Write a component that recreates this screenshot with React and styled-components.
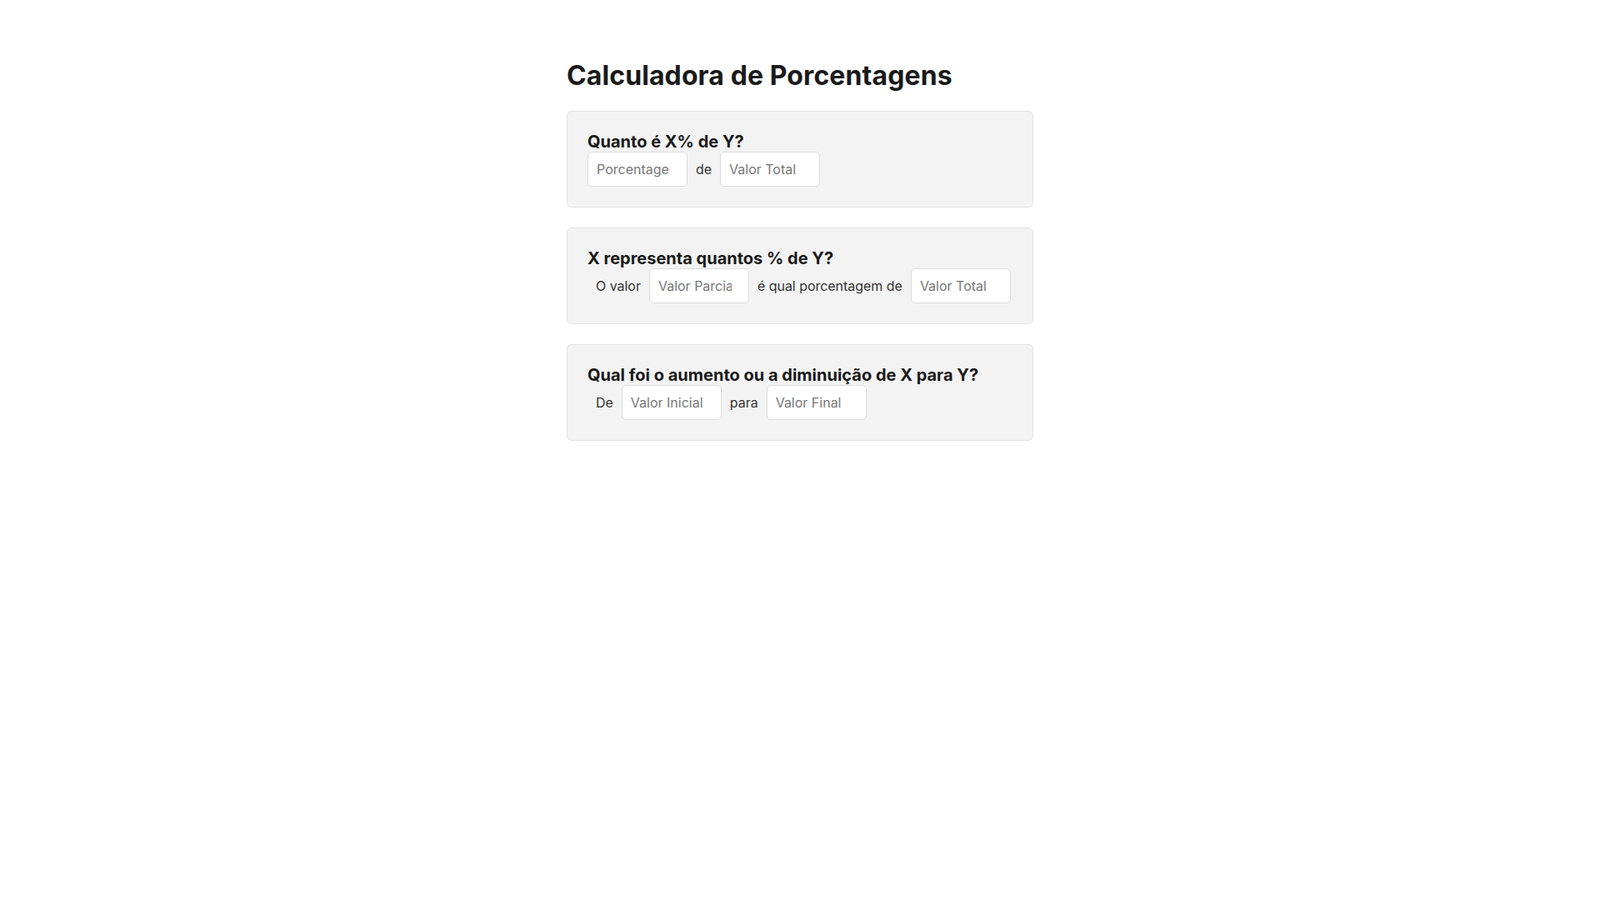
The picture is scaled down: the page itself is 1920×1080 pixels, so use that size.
import React from "react";
import styled, { createGlobalStyle } from "styled-components";

const Global = createGlobalStyle`
  html, body { margin: 0; padding: 0; background: #ffffff; }
  body { font-family: Inter, "Noto Sans", Arial, sans-serif; color: #1a1a1a; }
  * { box-sizing: border-box; }
`;

const Page = styled.main`
  width: 560px;
  margin: 0 auto;
  padding-top: 71px;
`;

const Title = styled.h1`
  margin: 0 0 23px;
  font-size: 32px;
  font-weight: 700;
  line-height: normal;
  letter-spacing: 0.1px;
  color: #1a1a1a;
`;

const Card = styled.section`
  background: #f3f3f3;
  border: 1px solid #e3e3e3;
  border-radius: 6px;
  padding: 24px;
  margin-bottom: 24px;
`;

const Heading = styled.h2`
  margin: 0;
  font-size: 20px;
  font-weight: 700;
  line-height: normal;
  color: #1a1a1a;
`;

const Row = styled.div`
  display: flex;
  align-items: center;
`;

const Label = styled.span`
  padding: 0 10px;
  font-size: 16px;
  letter-spacing: -0.03px;
  color: #333333;
`;

const Field = styled.input`
  width: 120px;
  padding: 10px 20px 10px 10px;
  font-family: Inter, "Noto Sans", Arial, sans-serif;
  font-size: 16px;
  line-height: normal;
  color: #1a1a1a;
  background: #ffffff;
  border: 1px solid #dcdcdc;
  border-radius: 5px;
  outline: none;
  -moz-appearance: textfield;
  &::placeholder { color: #777777; }
  &::-webkit-inner-spin-button,
  &::-webkit-outer-spin-button {
    -webkit-appearance: none;
    margin: 0;
  }
`;

const sections = [
  {
    title: "Quanto é X% de Y?",
    parts: [
      { input: "Porcentagem" },
      { label: "de" },
      { input: "Valor Total" },
    ],
  },
  {
    title: "X representa quantos % de Y?",
    parts: [
      { label: "O valor" },
      { input: "Valor Parcial" },
      { label: "é qual porcentagem de" },
      { input: "Valor Total" },
    ],
  },
  {
    title: "Qual foi o aumento ou a diminuição de X para Y?",
    parts: [
      { label: "De" },
      { input: "Valor Inicial" },
      { label: "para" },
      { input: "Valor Final" },
    ],
  },
];

export default function App() {
  return (
    <>
      <Global />
      <Page>
        <Title>Calculadora de Porcentagens</Title>
        {sections.map((s) => (
          <Card key={s.title}>
            <Heading>{s.title}</Heading>
            <Row>
              {s.parts.map((p, i) =>
                p.input ? (
                  <Field key={i} type="number" placeholder={p.input} />
                ) : (
                  <Label key={i}>{p.label}</Label>
                )
              )}
            </Row>
          </Card>
        ))}
      </Page>
    </>
  );
}
